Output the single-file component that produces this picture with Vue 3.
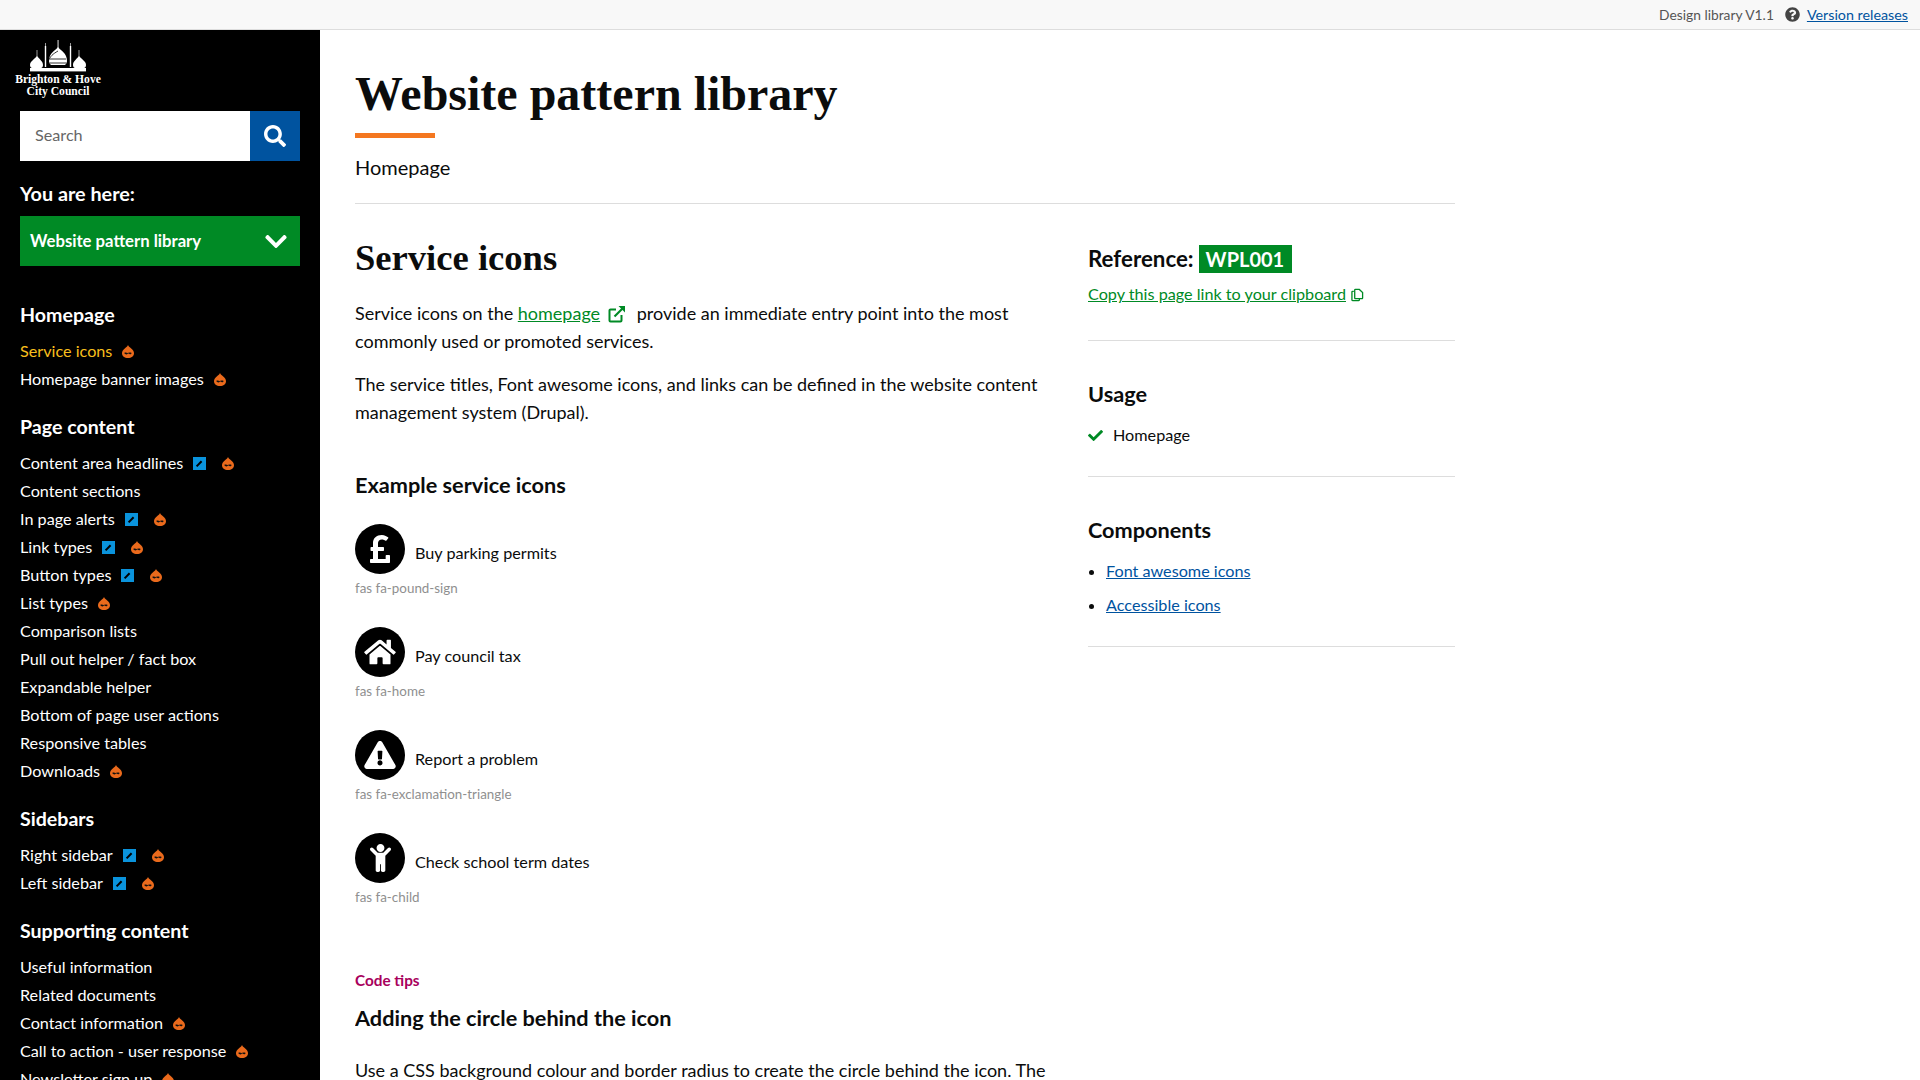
<template>
  <div class="page">
    <div class="topbar">
      <span class="version">Design library V1.1</span>
      <svg class="help" viewBox="0 0 512 512"><path fill="#444" d="M504 256c0 136.997-111.043 248-248 248S8 392.997 8 256C8 119.083 119.043 8 256 8s248 111.083 248 248zM262.655 90c-54.497 0-89.255 22.957-116.549 63.758-3.536 5.286-2.353 12.415 2.715 16.258l34.699 26.31c5.205 3.947 12.621 3.008 16.665-2.122 17.864-22.658 30.113-35.797 57.303-35.797 20.429 0 45.698 13.148 45.698 32.958 0 14.976-12.363 22.667-32.534 33.976C247.128 238.528 216 254.941 216 296v4c0 6.627 5.373 12 12 12h56c6.627 0 12-5.373 12-12v-1.333c0-28.462 83.186-29.647 83.186-106.667 0-58.002-60.165-102-116.531-102zM256 338c-25.365 0-46 20.635-46 46 0 25.364 20.635 46 46 46s46-20.636 46-46c0-25.365-20.635-46-46-46z"/></svg>
      <a class="version-link" href="#">Version releases</a>
    </div>

    <div class="layout">
      <aside class="sidebar">
        <div class="logo">
          <svg class="logo-mark" viewBox="0 0 70 34">
            <g fill="#fff">
              <rect x="34.6" y="0" width="0.9" height="8"/>
              <path d="M35 7c3 4 9 6 9 14 0 2-1 3-2 4H28c-1-1-2-2-2-4 0-8 6-10 9-14z"/>
              <rect x="21.8" y="6" width="1.4" height="21"/>
              <rect x="46.8" y="6" width="1.4" height="21"/>
              <rect x="22.2" y="3" width="0.6" height="4"/>
              <rect x="47.2" y="3" width="0.6" height="4"/>
              <rect x="13.7" y="10" width="0.6" height="7"/>
              <path d="M14 16c2 3 6 5 6 9 0 2-1 3-2 3h-9c-1 0-2-1-2-3 0-4 5-6 7-9z"/>
              <rect x="55.7" y="10" width="0.6" height="7"/>
              <path d="M56 16c2 3 7 5 7 9 0 2-1 3-2 3h-9c-1 0-2-1-2-3 0-4 4-6 6-9z"/>
              <rect x="7" y="28" width="56" height="3.4"/>
            </g>
            <path d="M25 22c2-6 5-8 10-11" fill="none" stroke="#000" stroke-width="0.8"/>
            <path d="M27 19h16M26.5 23h17" stroke="#000" stroke-width="0.8"/>
          </svg>
          <div class="logo-text">Brighton &amp; Hove<br />City Council</div>
        </div>

        <div class="search">
          <input class="search-input" type="text" placeholder="Search" />
          <button class="search-btn" type="button">
            <svg viewBox="0 0 512 512"><path fill="#fff" d="M505 442.7L405.3 343c-4.5-4.5-10.6-7-17-7H372c27.6-35.3 44-79.7 44-128C416 93.1 322.9 0 208 0S0 93.1 0 208s93.1 208 208 208c48.3 0 92.7-16.4 128-44v16.3c0 6.4 2.5 12.5 7 17l99.7 99.7c9.4 9.4 24.6 9.4 33.9 0l28.3-28.3c9.4-9.4 9.4-24.6.1-34zM208 336c-70.7 0-128-57.2-128-128 0-70.7 57.2-128 128-128 70.7 0 128 57.2 128 128 0 70.7-57.2 128-128 128z"/></svg>
          </button>
        </div>

        <div class="here">You are here:</div>
        <div class="select">
          <span>Website pattern library</span>
          <svg viewBox="0 0 448 512"><path fill="#fff" d="M207.029 381.476L12.686 187.132c-9.373-9.373-9.373-24.569 0-33.941l22.667-22.667c9.357-9.357 24.522-9.375 33.901-.04L224 284.505l154.745-154.021c9.379-9.335 24.544-9.317 33.901.04l22.667 22.667c9.373 9.373 9.373 24.569 0 33.941L240.971 381.476c-9.373 9.372-24.569 9.372-33.942 0z"/></svg>
        </div>

        <nav class="nav">
          <div v-for="group in nav" :key="group.title" class="nav-group">
            <div class="nav-title">{{ group.title }}</div>
            <a v-for="item in group.items" :key="item.name" href="#" class="nav-item" :class="{ current: item.current }">
              <span>{{ item.name }}</span>
              <svg v-if="item.edit" class="edit" viewBox="0 0 13 13">
                <rect width="13" height="13" fill="#0a93dc"/>
                <path d="M3.6 9.4l5-5.200" stroke="#000" stroke-width="2"/>
              </svg>
              <svg v-if="item.drop" class="drop" viewBox="0 0 12 13">
                <path fill="#ea6a1c" d="M6 0c.8 1.800 2 2.400 3.500 3.700C11 5 12 6.500 12 8.200 12 11 9.500 13 6 13S0 11 0 8.200C0 6.500 1 5 2.500 3.700 4 2.400 5.200 1.800 6 0z"/>
                <path d="M2.200 8c1-.7 2.400-.6 3.300.1.800-.7 2.600-1 4.200-.2-.5 1.300-1.800 1.600-2.800.9-.4-.3-.8-.3-1.200 0-.9 1-2.700.7-3.500-.8z" fill="#111"/>
              </svg>
            </a>
          </div>
        </nav>
      </aside>

      <main class="main">
        <h1>Website pattern library</h1>
        <div class="accent"></div>
        <div class="subtitle">Homepage</div>
        <hr class="rule" />

        <div class="columns">
          <section class="content">
            <h2>Service icons</h2>
            <p class="first">
              Service icons on the <a class="green" href="#">homepage</a>
              <svg class="ext" viewBox="0 0 18 18">
                <path d="M13.500 10v5.500a1 1 0 0 1-1 1H2.500a1 1 0 0 1-1-1V5.500a1 1 0 0 1 1-1H8" fill="none" stroke="#008a25" stroke-width="2"/>
                <path d="M6.500 11.500L15 3" fill="none" stroke="#008a25" stroke-width="2.200"/>
                <path d="M10.500 1h6.500v6.500z" fill="#008a25"/>
              </svg>
              provide an immediate entry point into the most commonly used or promoted services.
            </p>
            <p>The service titles, Font awesome icons, and links can be defined in the website content management system (Drupal).</p>

            <h3 class="example">Example service icons</h3>

            <div v-for="s in services" :key="s.label" class="service">
              <div class="service-row">
                <span class="circle">
                  <svg :viewBox="s.box" :style="{ width: s.w + 'px', height: s.h + 'px' }"><path fill="#fff" :d="s.path"/></svg>
                </span>
                <span class="service-label">{{ s.label }}</span>
              </div>
              <div class="service-class">{{ s.cls }}</div>
            </div>

            <div class="tips">Code tips</div>
            <h3 class="adding">Adding the circle behind the icon</h3>
            <p class="last">Use a CSS background colour and border radius to create the circle behind the icon. The</p>
          </section>

          <aside class="side">
            <div class="ref">
              <span class="ref-label">Reference:</span>
              <span class="badge">WPL001</span>
            </div>
            <div class="copy">
              <a class="green" href="#">Copy this page link to your clipboard</a>
              <svg class="copy-icon" viewBox="0 0 14 14">
                <path d="M3 3H1.700a.7.7 0 0 0-.7.7v8.600a.7.7 0 0 0 .7.7h6.600a.7.7 0 0 0 .7-.7V11" fill="none" stroke="#008a25" stroke-width="1.400"/>
                <path d="M4 1.700a.7.7 0 0 1 .7-.7h4.300L12.500 4.300v6a.7.7 0 0 1-.7.7H4.700a.7.7 0 0 1-.7-.7z" fill="none" stroke="#008a25" stroke-width="1.400"/>
              </svg>
            </div>
            <hr class="rule side-rule" />

            <h3 class="side-title">Usage</h3>
            <div class="usage">
              <svg viewBox="0 0 512 512"><path fill="#008a25" d="M173.898 439.404l-166.4-166.4c-9.997-9.997-9.997-26.206 0-36.204l36.203-36.204c9.997-9.998 26.207-9.998 36.204 0L192 312.69 432.095 72.596c9.997-9.997 26.207-9.997 36.204 0l36.203 36.204c9.997 9.997 9.997 26.206 0 36.204l-294.4 294.401c-9.998 9.997-26.207 9.997-36.204-.001z"/></svg>
              <span>Homepage</span>
            </div>
            <hr class="rule usage-rule" />

            <h3 class="side-title">Components</h3>
            <ul class="links">
              <li><a href="#">Font awesome icons</a></li>
              <li><a href="#">Accessible icons</a></li>
            </ul>
            <hr class="rule links-rule" />
          </aside>
        </div>
      </main>
    </div>
  </div>
</template>

<script setup>
const nav = [
  {
    title: "Homepage",
    items: [
      { name: "Service icons", drop: true, current: true },
      { name: "Homepage banner images", drop: true },
    ],
  },
  {
    title: "Page content",
    items: [
      { name: "Content area headlines", edit: true, drop: true },
      { name: "Content sections" },
      { name: "In page alerts", edit: true, drop: true },
      { name: "Link types", edit: true, drop: true },
      { name: "Button types", edit: true, drop: true },
      { name: "List types", drop: true },
      { name: "Comparison lists" },
      { name: "Pull out helper / fact box" },
      { name: "Expandable helper" },
      { name: "Bottom of page user actions" },
      { name: "Responsive tables" },
      { name: "Downloads", drop: true },
    ],
  },
  {
    title: "Sidebars",
    items: [
      { name: "Right sidebar", edit: true, drop: true },
      { name: "Left sidebar", edit: true, drop: true },
    ],
  },
  {
    title: "Supporting content",
    items: [
      { name: "Useful information" },
      { name: "Related documents" },
      { name: "Contact information", drop: true },
      { name: "Call to action - user response", drop: true },
      { name: "Newsletter sign up", drop: true },
    ],
  },
];

const services = [
  {
    label: "Buy parking permits",
    cls: "fas fa-pound-sign",
    box: "0 0 320 512",
    w: 20,
    h: 32,
    path: "M308 352h-45.495c-6.627 0-12 5.373-12 12v50.848H128V288h84c6.627 0 12-5.373 12-12v-40c0-6.627-5.373-12-12-12h-84v-63.556c0-32.266 24.562-57.086 61.792-57.086 23.658 0 45.878 11.505 57.652 18.849 5.151 3.213 11.888 2.051 15.688-2.685l28.493-35.513c4.233-5.276 3.279-13.005-2.119-17.081C273.124 63.56 236.576 32 187.931 32 106.026 32 48 84.742 48 157.961V224H20c-6.627 0-12 5.373-12 12v40c0 6.627 5.373 12 12 12h28v128H12c-6.627 0-12 5.373-12 12v40c0 6.627 5.373 12 12 12h296c6.627 0 12-5.373 12-12V364c0-6.627-5.373-12-12-12z",
  },
  {
    label: "Pay council tax",
    cls: "fas fa-home",
    box: "0 0 576 512",
    w: 32,
    h: 28,
    path: "M280.37 148.26L96 300.11V464a16 16 0 0 0 16 16l112.06-.29a16 16 0 0 0 15.92-16V368a16 16 0 0 1 16-16h64a16 16 0 0 1 16 16v95.64a16 16 0 0 0 16 16.05L464 480a16 16 0 0 0 16-16V300L295.67 148.26a12.19 12.19 0 0 0-15.3 0zM571.6 251.47L488 182.56V44.05a12 12 0 0 0-12-12h-56a12 12 0 0 0-12 12v72.61L318.47 43a48 48 0 0 0-61 0L4.34 251.47a12 12 0 0 0-1.6 16.9l25.5 31A12 12 0 0 0 45.15 301l235.22-193.74a12.19 12.19 0 0 1 15.3 0L530.9 301a12 12 0 0 0 16.9-1.6l25.5-31a12 12 0 0 0-1.7-16.93z",
  },
  {
    label: "Report a problem",
    cls: "fas fa-exclamation-triangle",
    box: "0 0 576 512",
    w: 32,
    h: 28,
    path: "M569.517 440.013C587.975 472.007 564.806 512 527.94 512H48.054c-36.937 0-59.999-40.055-41.577-71.987L246.423 23.985c18.467-32.009 64.72-31.951 83.154 0l239.94 416.028zM288 354c-25.405 0-46 20.595-46 46s20.595 46 46 46 46-20.595 46-46-20.595-46-46-46zm-43.673-165.346l7.418 136c.347 6.364 5.609 11.346 11.982 11.346h48.546c6.373 0 11.635-4.982 11.982-11.346l7.418-136c.375-6.874-5.098-12.654-11.982-12.654h-63.383c-6.884 0-12.356 5.78-11.981 12.654z",
  },
  {
    label: "Check school term dates",
    cls: "fas fa-child",
    box: "0 0 384 512",
    w: 21,
    h: 28,
    path: "M120 72c0-39.765 32.235-72 72-72s72 32.235 72 72c0 39.764-32.235 72-72 72s-72-32.236-72-72zm254.627 1.373c-12.496-12.497-32.758-12.497-45.254 0L242.745 160H141.254L54.627 73.373c-12.496-12.497-32.758-12.497-45.254 0-12.497 12.497-12.497 32.758 0 45.255L104 213.254V480c0 17.673 14.327 32 32 32h16c17.673 0 32-14.327 32-32V368h16v112c0 17.673 14.327 32 32 32h16c17.673 0 32-14.327 32-32V213.254l94.627-94.627c12.497-12.497 12.497-32.757 0-45.254z",
  },
];
</script>

<style>
html, body {
  margin: 0;
  height: 100%;
  overflow: hidden;
}
</style>

<style scoped>
.page {
  height: 100vh;
  overflow: hidden;
  display: flex;
  flex-direction: column;
  font-family: Lato, "Liberation Sans", sans-serif;
  font-size: 18px;
  line-height: 28px;
  color: #0b0c0c;
  background: #fff;
}

/* top bar */
.topbar {
  flex: none;
  height: 29px;
  border-bottom: 1px solid #ddd;
  background: #f8f8f8;
  display: flex;
  align-items: center;
  justify-content: flex-end;
  padding-right: 12px;
  font-size: 14.3px;
}
.version {
  font-size: 13.8px;
  color: #555;
}
.help {
  width: 15px;
  height: 15px;
  margin: 0 7px 0 11px;
}
.version-link {
  color: #00539f;
}

.layout {
  flex: 1;
  display: flex;
  min-height: 0;
}

/* sidebar */
.sidebar {
  flex: none;
  width: 320px;
  box-sizing: border-box;
  background: #000;
  color: #fff;
  padding: 10px 20px 0;
  overflow: hidden;
  font-size: 16.2px;
}
.logo {
  width: 86px;
  height: 57px;
  margin-left: -5px;
  text-align: center;
}
.logo-mark {
  display: block;
  width: 70px;
  height: 34px;
  margin: 0 auto;
}
.logo-text {
  font-family: "Liberation Serif", serif;
  font-weight: 700;
  font-size: 11.6px;
  line-height: 11.5px;
  white-space: nowrap;
}
.search {
  display: flex;
  height: 50px;
  margin-top: 14px;
}
.search-input {
  flex: 1;
  min-width: 0;
  border: 0;
  padding: 0 15px 2px;
  font: inherit;
  background: #fff;
}
.search-input::placeholder {
  color: #666;
  opacity: 1;
}
.search-btn {
  flex: none;
  width: 50px;
  border: 0;
  padding: 0;
  background: #00539f;
  display: flex;
  align-items: center;
  justify-content: center;
}
.search-btn svg {
  width: 22px;
  height: 22px;
}
.here {
  margin-top: 18px;
  font-size: 19.8px;
  font-weight: 700;
}
.select {
  height: 50px;
  margin-top: 9px;
  background: #008a25;
  display: flex;
  align-items: center;
  justify-content: space-between;
  padding: 0 13px 0 10px;
  font-weight: 700;
  font-size: 16.7px;
}
.select svg {
  width: 22px;
  height: 25px;
}
.nav {
  margin-top: 35px;
}
.nav-group {
  margin-bottom: 20px;
}
.nav-title {
  font-weight: 700;
  font-size: 19.6px;
  margin-bottom: 8px;
}
.nav-item {
  display: flex;
  align-items: center;
  height: 28px;
  line-height: 26px;
  color: #fff;
  text-decoration: none;
  white-space: nowrap;
}
.nav-item.current {
  color: #f8bf1c;
}
.edit {
  width: 13px;
  height: 13px;
  margin-left: 10px;
}
.drop {
  width: 12px;
  height: 13px;
  margin-left: 10px;
}
.edit + .drop {
  margin-left: 16px;
}

/* main */
.main {
  flex: none;
  width: 1100px;
  margin-left: 35px;
  padding-top: 39px;
  overflow: hidden;
}
h1 {
  margin: 0;
  font-family: "Liberation Serif", serif;
  font-size: 48px;
  line-height: 50px;
  font-weight: 700;
}
.accent {
  width: 80px;
  height: 5px;
  margin-top: 14px;
  background: #f47720;
}
.subtitle {
  margin-top: 15px;
  font-size: 20px;
}
.rule {
  margin: 22px 0 0;
  border: 0;
  border-top: 1px solid #ddd;
}
.columns {
  display: flex;
}
.content {
  flex: none;
  width: 700px;
}
.side {
  flex: none;
  width: 367px;
  margin-left: 33px;
  padding-top: 41px;
}
h2 {
  margin: 34px 0 0;
  font-family: "Liberation Serif", serif;
  font-size: 36.6px;
  line-height: 40px;
  font-weight: 700;
}
p {
  margin: 15px 0 0;
}
p.first {
  margin-top: 21px;
}
.ext {
  width: 18px;
  height: 18px;
  margin: 0 6px 0 8px;
  vertical-align: -3px;
}
.green {
  color: #008a25;
}
h3 {
  margin: 0;
  font-size: 21.7px;
  line-height: 30px;
  font-weight: 700;
}
.example {
  margin-top: 44px;
  margin-bottom: 24px;
}
.service {
  margin-bottom: 29px;
}
.service-row {
  display: flex;
  align-items: center;
}
.circle {
  flex: none;
  width: 50px;
  height: 50px;
  border-radius: 50%;
  background: #000;
  display: flex;
  align-items: center;
  justify-content: center;
}
.service-label {
  margin: 7px 0 0 10px;
  font-size: 16.2px;
}
.service-class {
  margin-top: 4px;
  font-size: 13.4px;
  line-height: 20px;
  color: #8f8f8f;
}
.tips {
  margin-top: 63px;
  font-size: 15.3px;
  line-height: 20px;
  font-weight: 700;
  color: #a8005c;
}
.adding {
  margin-top: 13px;
}
p.last {
  margin-top: 23px;
  white-space: nowrap;
}

/* right column */
.ref {
  display: flex;
  align-items: center;
  height: 28px;
}
.ref-label {
  font-size: 22.3px;
  font-weight: 700;
}
.badge {
  margin-left: 5px;
  height: 28px;
  padding: 0 8px 0 7px;
  background: #008a25;
  color: #fff;
  font-size: 20px;
  font-weight: 700;
  line-height: 28px;
}
.copy {
  margin-top: 7px;
  white-space: nowrap;
  font-size: 16.2px;
}
.copy-icon {
  width: 13px;
  height: 14px;
  margin-left: 5px;
  vertical-align: -2px;
}
.side-rule {
  margin-top: 32px;
}
.side-title {
  margin-top: 38px;
}
.usage {
  display: flex;
  align-items: center;
  margin-top: 12px;
  font-size: 16.2px;
}
.usage svg {
  width: 15px;
  height: 15px;
  margin-right: 10px;
}
.usage-rule {
  margin-top: 27px;
}
.links {
  margin: 12px 0 0;
  padding: 0 0 0 18px;
  font-size: 16.2px;
}
.links li + li {
  margin-top: 6px;
}
.links a {
  color: #00539f;
}
.links-rule {
  margin-top: 27px;
}
</style>
